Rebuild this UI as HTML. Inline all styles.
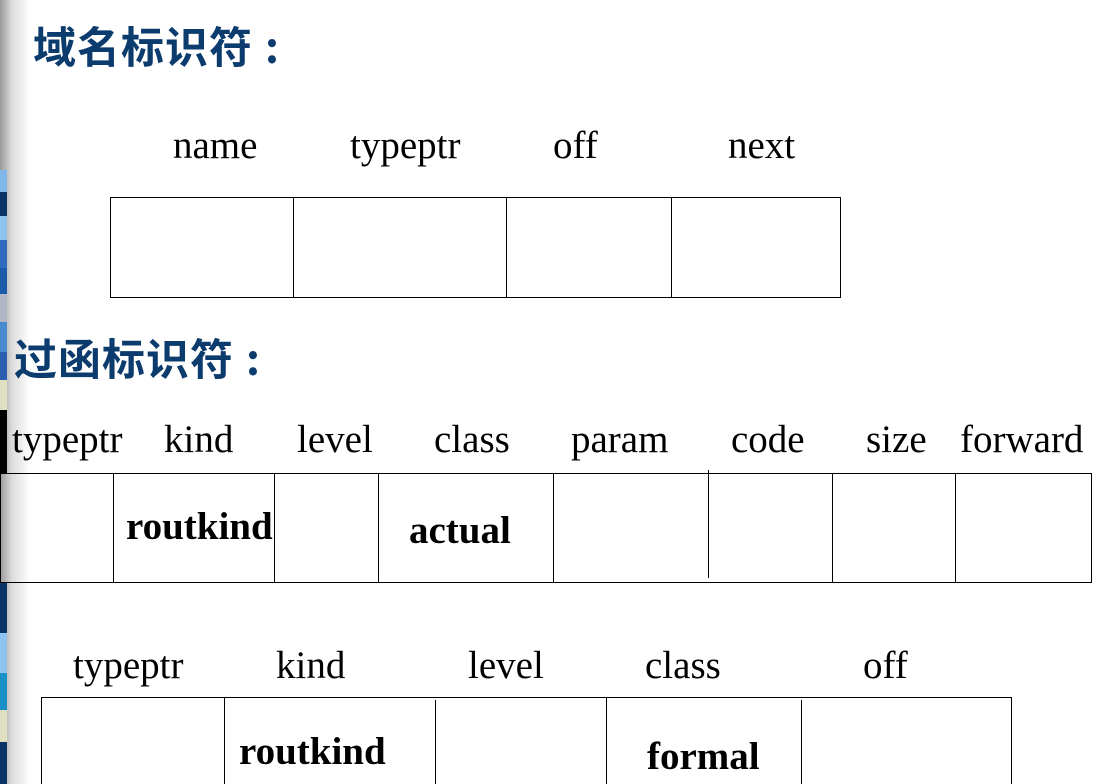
<html><head><style>
html,body{margin:0;width:1093px;height:784px;overflow:hidden;}
body{background:#fff;position:relative;font-family:"Liberation Serif",serif;}
.s{position:absolute;left:0;top:0;width:30px;height:784px;background:linear-gradient(90deg,#9a9a9a,#dcdcdc 40%,#fff);}
.c{position:absolute;left:0;width:7px;}
.h{position:absolute;font-family:"Noto Sans CJK SC",sans-serif;font-weight:bold;color:#0c3b6e;font-size:43px;letter-spacing:1px;line-height:50px;}
.t{position:absolute;font-size:39px;color:#000;white-space:nowrap;line-height:44px;}
.b{position:absolute;border:1px solid #000;box-sizing:border-box;}
.v{position:absolute;width:1px;background:#000;}
.bb{position:absolute;font-weight:bold;font-size:39px;line-height:44px;}
</style></head><body>
<div class="s"></div>
<div class="c" style="top:170px;height:22px;background:#7fb8e8"></div>
<div class="c" style="top:192px;height:24px;background:#0a3466"></div>
<div class="c" style="top:216px;height:24px;background:#8ec4f0"></div>
<div class="c" style="top:240px;height:28px;background:#2f6cc0"></div>
<div class="c" style="top:268px;height:26px;background:#1a5aa8"></div>
<div class="c" style="top:294px;height:28px;background:#b0b8c8"></div>
<div class="c" style="top:322px;height:30px;background:#4a8ad0"></div>
<div class="c" style="top:352px;height:28px;background:#2a5fb0"></div>
<div class="c" style="top:380px;height:30px;background:#e0e0c0"></div>
<div class="c" style="top:410px;height:63px;background:#000"></div>
<div class="c" style="top:583px;height:50px;background:#0a3466"></div>
<div class="c" style="top:633px;height:40px;background:#8ec4f0"></div>
<div class="c" style="top:673px;height:37px;background:#1a90c8"></div>
<div class="c" style="top:710px;height:32px;background:#e0e0c0"></div>
<div class="c" style="top:742px;height:42px;background:#0a3466"></div>

<div class="h" style="left:33px;top:20px">域名标识符<span style="margin-left:12px">:</span></div>
<div class="t" style="left:173px;top:124px">name</div>
<div class="t" style="left:350px;top:124px">typeptr</div>
<div class="t" style="left:553px;top:124px">off</div>
<div class="t" style="left:728px;top:124px">next</div>
<div class="b" style="left:110px;top:197px;width:731px;height:101px"></div>
<div class="v" style="left:293px;top:197px;height:101px"></div>
<div class="v" style="left:506px;top:197px;height:101px"></div>
<div class="v" style="left:671px;top:197px;height:101px"></div>

<div class="h" style="left:14px;top:332px">过函标识符<span style="margin-left:12px">:</span></div>
<div class="t" style="left:12px;top:418px">typeptr</div>
<div class="t" style="left:164px;top:418px">kind</div>
<div class="t" style="left:297px;top:418px">level</div>
<div class="t" style="left:434px;top:418px">class</div>
<div class="t" style="left:571px;top:418px">param</div>
<div class="t" style="left:731px;top:418px">code</div>
<div class="t" style="left:866px;top:418px">size</div>
<div class="t" style="left:960px;top:418px">forward</div>
<div class="b" style="left:0;top:473px;width:1092px;height:110px"></div>
<div class="v" style="left:113px;top:473px;height:110px"></div>
<div class="v" style="left:274px;top:473px;height:110px"></div>
<div class="v" style="left:378px;top:473px;height:110px"></div>
<div class="v" style="left:553px;top:473px;height:110px"></div>
<div class="v" style="left:708px;top:470px;height:108px"></div>
<div class="v" style="left:832px;top:473px;height:110px"></div>
<div class="v" style="left:955px;top:473px;height:110px"></div>
<div class="bb" style="left:126px;top:505px">routkind</div>
<div class="bb" style="left:409px;top:509px">actual</div>

<div class="t" style="left:73px;top:644px">typeptr</div>
<div class="t" style="left:276px;top:644px">kind</div>
<div class="t" style="left:468px;top:644px">level</div>
<div class="t" style="left:645px;top:644px">class</div>
<div class="t" style="left:863px;top:644px">off</div>
<div class="b" style="left:41px;top:697px;width:971px;height:100px"></div>
<div class="v" style="left:224px;top:697px;height:90px"></div>
<div class="v" style="left:435px;top:700px;height:90px"></div>
<div class="v" style="left:606px;top:697px;height:90px"></div>
<div class="v" style="left:801px;top:700px;height:90px"></div>
<div class="bb" style="left:239px;top:730px">routkind</div>
<div class="bb" style="left:647px;top:735px">formal</div>
</body></html>
